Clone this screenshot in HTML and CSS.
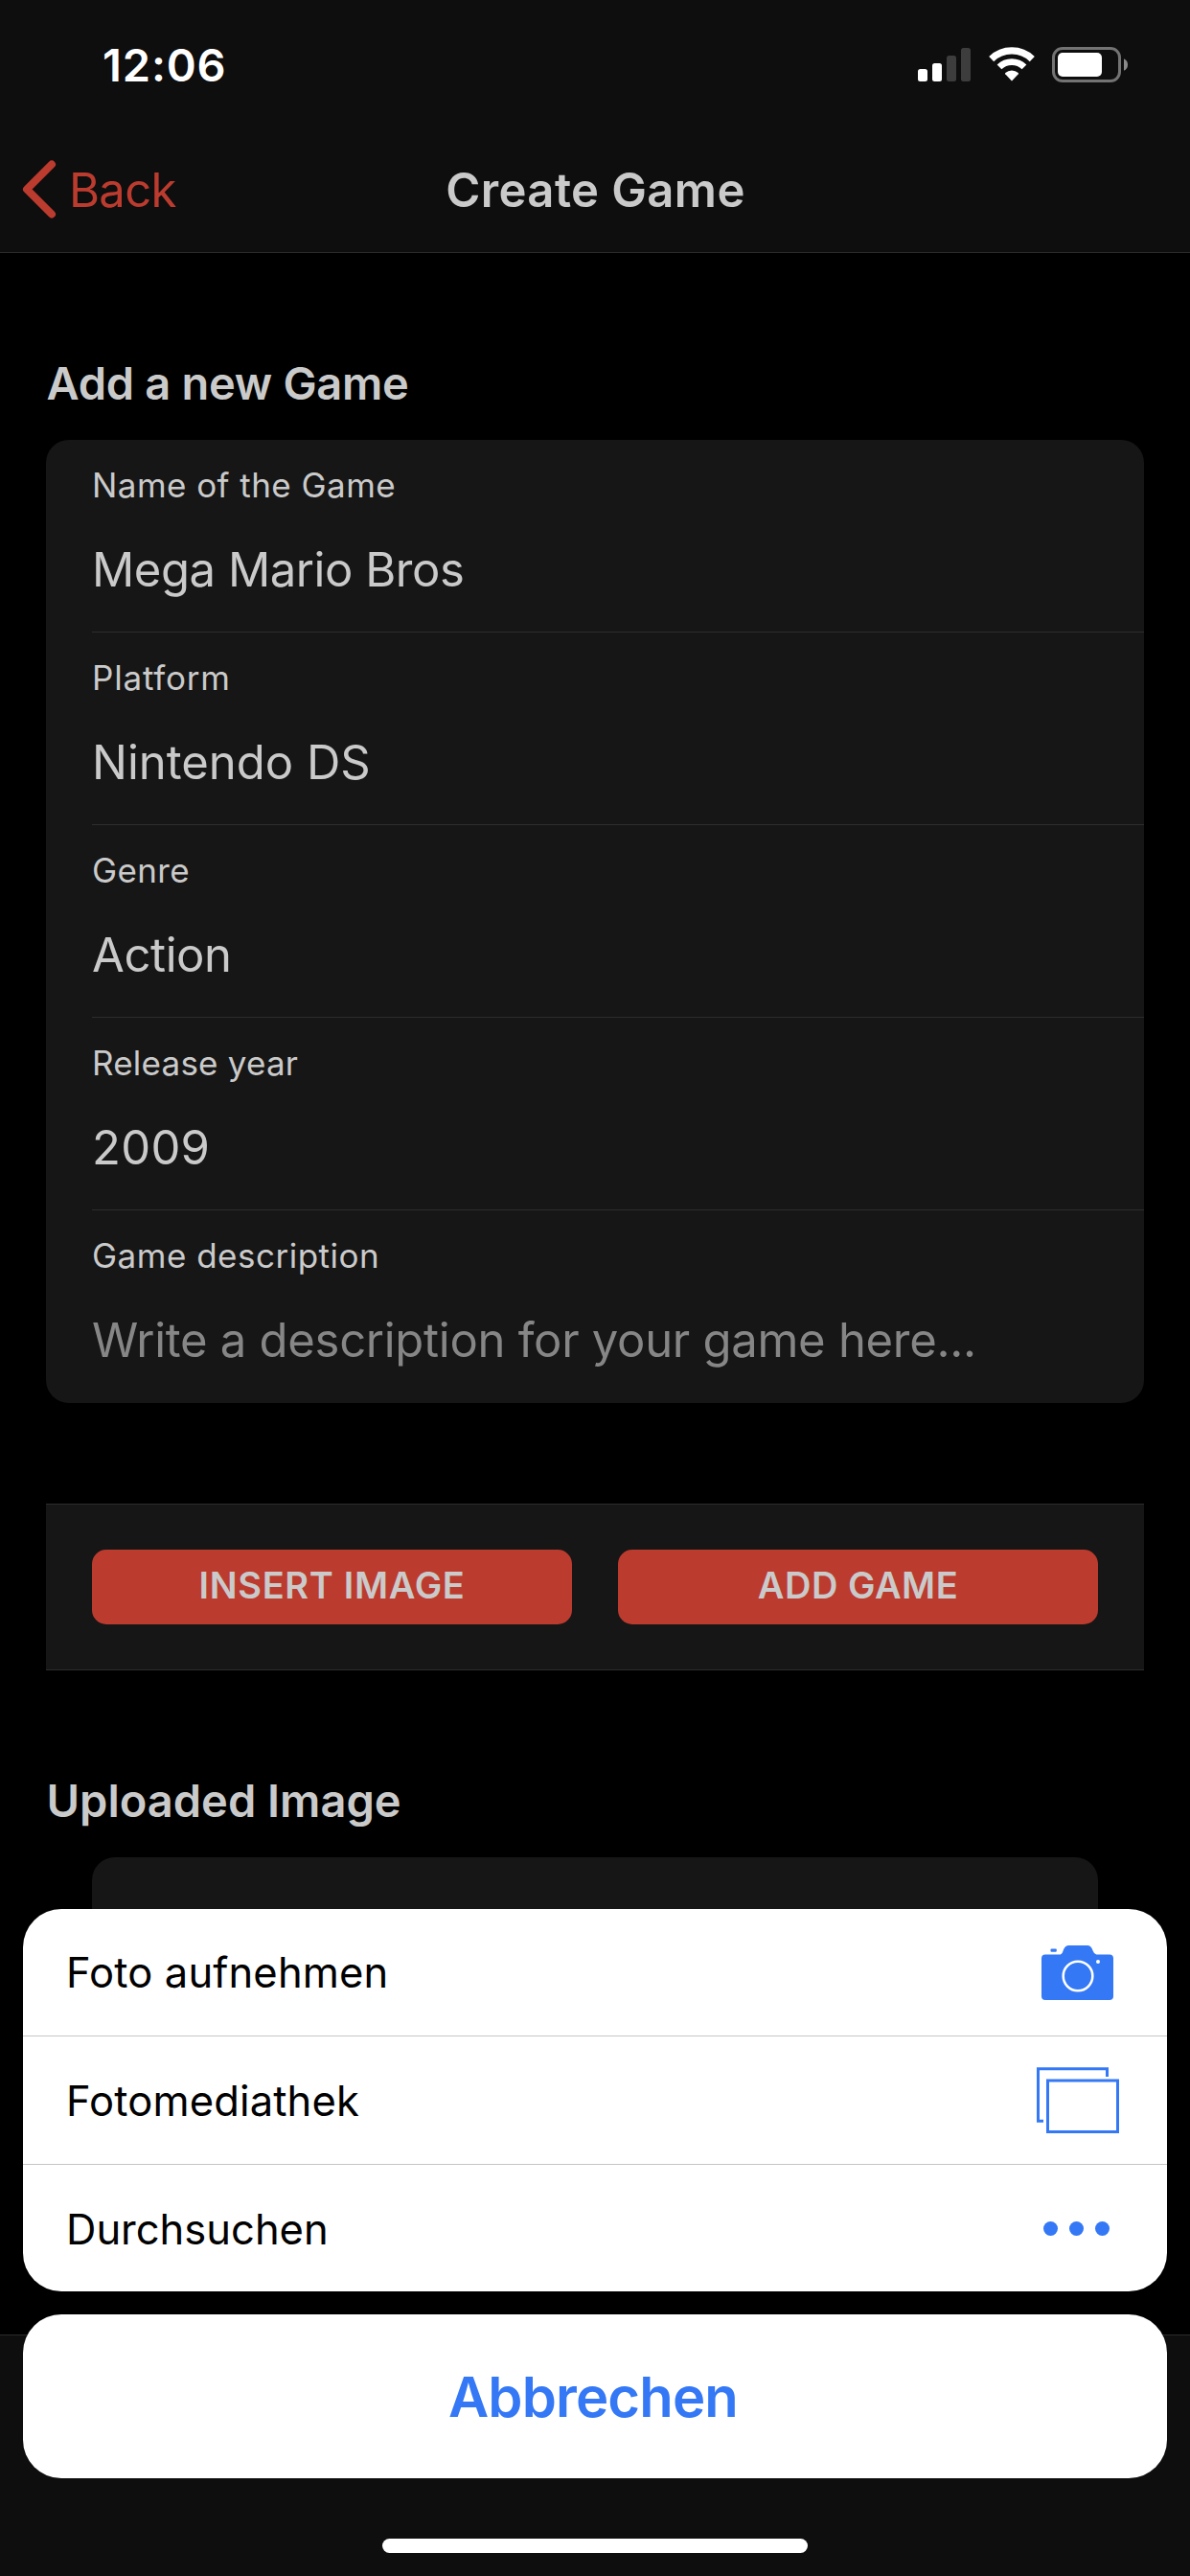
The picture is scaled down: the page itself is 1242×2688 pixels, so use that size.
FILE: index.html
```html
<!DOCTYPE html>
<html lang="en">
<head>
<meta charset="utf-8">
<title>Create Game</title>
<link rel="stylesheet" href="styles.css">
</head>
<body>
<div class="screen">
  <header class="header">
    <div class="status">
      <span class="clock">12:06</span>
      <div class="indicators">
        <svg width="56" height="36" viewBox="0 0 56 36">
          <rect x="0" y="22" width="10" height="13" rx="2.5" fill="#fff"/>
          <rect x="15" y="16" width="10" height="19" rx="2.5" fill="#fff"/>
          <rect x="30" y="8" width="10" height="27" rx="2.5" fill="#3d3d3d"/>
          <rect x="45" y="0" width="10" height="35" rx="2.5" fill="#3d3d3d"/>
        </svg>
        <svg width="48" height="36" viewBox="0 0 48 36">
          <path d="M2.7 12.6A30.5 30.5 0 0 1 45.3 12.6" fill="none" stroke="#fff" stroke-width="7.2"/>
          <path d="M11 20.9A18.7 18.7 0 0 1 37 20.9" fill="none" stroke="#fff" stroke-width="6.8"/>
          <path d="M24 35.5l-6.8-7.2a1 1 0 0 1 .1-1.3a10 10 0 0 1 13.4 0a1 1 0 0 1 .1 1.3z" fill="#fff"/>
        </svg>
        <svg width="80" height="38" viewBox="0 0 80 38">
          <rect x="1.5" y="1.5" width="69" height="34" rx="9.5" fill="none" stroke="#737373" stroke-width="3"/>
          <rect x="6" y="6" width="46" height="25" rx="5" fill="#fff"/>
          <path d="M75 12.2q4 2 4 6.300q0 4.300-4 6.300z" fill="#8a8a8a"/>
        </svg>
      </div>
    </div>
    <nav class="nav">
      <a class="back">
        <svg width="38" height="64" viewBox="0 0 38 64"><path d="M32 6.500L6 32.500L32 58.500" fill="none" stroke="#bc3b2f" stroke-width="8" stroke-linecap="round" stroke-linejoin="round"/></svg>
        <span>Back</span>
      </a>
      <h1 class="title">Create Game</h1>
    </nav>
  </header>

  <main class="content">
    <h2 class="section-title add-title">Add a new Game</h2>
    <div class="card">
      <div class="field"><div class="label name-label">Name of the Game</div><div class="value name-value">Mega Mario Bros</div></div>
      <div class="field"><div class="label platform-label">Platform</div><div class="value platform-value">Nintendo DS</div></div>
      <div class="field"><div class="label genre-label">Genre</div><div class="value genre-value">Action</div></div>
      <div class="field"><div class="label year-label">Release year</div><div class="value year-value">2009</div></div>
      <div class="field"><div class="label desc-label">Game description</div><div class="value placeholder">Write a description for your game here...</div></div>
    </div>
    <div class="actions">
      <button class="button insert">INSERT IMAGE</button>
      <button class="button">ADD GAME</button>
    </div>
    <h2 class="section-title">Uploaded Image</h2>
    <div class="image-box"></div>
  </main>
  <footer class="tabbar"></footer>

  <div class="sheet">
    <div class="menu">
      <div class="item"><span>Foto aufnehmen</span>
        <svg class="camera" width="75" height="57" viewBox="0 0 75 57">
          <rect x="9.500" y="3.500" width="6.300" height="3.200" rx="1" fill="#3478f6"/>
          <path d="M4 9.500H19C21.500 9.500 22 7 23 4.500C24.200 1.500 26 0 28.500 0H48C50.500 0 52 1.500 53.200 4.500C54.200 7 55.500 9.500 58.500 9.500H71Q75 9.500 75 13.500V53Q75 57 71 57H4Q0 57 0 53V13.500Q0 9.500 4 9.500Z" fill="#3478f6"/>
          <circle cx="38" cy="32" r="15.300" fill="none" stroke="#fff" stroke-width="2.600"/>
          <circle cx="59" cy="17" r="2" fill="#fff"/>
        </svg>
      </div>
      <div class="item"><span>Fotomediathek</span>
        <svg class="photos" width="86" height="70" viewBox="0 0 86 70" fill="none" stroke="#3478f6" stroke-width="3">
          <path d="M73.500 10V1.800H1.500V56.200H7"/>
          <rect x="11.500" y="14" width="73" height="53.500"/>
        </svg>
      </div>
      <div class="item last"><span class="browse">Durchsuchen</span>
        <svg class="dots" width="70" height="16" viewBox="0 0 70 16" fill="#3478f6"><circle cx="7.500" cy="7.500" r="7.500"/><circle cx="34.500" cy="7.500" r="7.500"/><circle cx="61.500" cy="7.500" r="7.500"/></svg>
      </div>
    </div>
    <button class="cancel">Abbrechen</button>
    <div class="home-indicator"></div>
  </div>
</div>
</body>
</html>
```
FILE: styles.css
```css
* { box-sizing: border-box; }

body {
  margin: 0;
  background: #000;
  color: #cacaca;
  font-family: Inter, "Liberation Sans", sans-serif;
}

h1, h2 { margin: 0; font-weight: 600; }
svg { display: block; flex: none; }
button { border: 0; margin: 0; font-family: inherit; }

.screen {
  position: relative;
  display: flex;
  flex-direction: column;
  width: 1242px;
  height: 2688px;
  overflow: hidden;
}

/* Header */
.header {
  flex: none;
  height: 264px;
  background: #0e0e0e;
  border-bottom: 1px solid #2b2b2b;
}
.status {
  display: flex;
  justify-content: space-between;
  align-items: flex-start;
  height: 132px;
  padding: 38px 64px 0 107px;
}
.clock {
  color: #fff;
  font-size: 47px;
  font-weight: 600;
  line-height: 60px;
  letter-spacing: .86px;
}
.indicators { display: flex; gap: 18px; padding-top: 11px; }
.indicators svg:first-child { margin-top: 1px; }

.nav {
  display: grid;
  grid-template-columns: 1fr auto 1fr;
  align-items: center;
  height: 131px;
  padding: 3px 0 0 1px;
}
.back {
  display: flex;
  align-items: center;
  gap: 12px;
  padding-left: 21px;
  color: #bc3b2f;
  font-size: 49px;
  line-height: 60px;
  letter-spacing: -.7px;
}
.back svg { margin-top: -5px; }
.title { font-size: 49px; line-height: 60px; letter-spacing: .4px; }

/* Form */
.content { flex: 1; min-height: 0; padding: 0 48px; overflow: hidden; }
.section-title { margin: 106px 0 29px .5px; font-size: 47px; line-height: 60px; }
.add-title { letter-spacing: -.3px; }
.card { background: #161616; border-radius: 24px; }
.field {
  display: flex;
  flex-direction: column;
  gap: 37px;
  height: 201px;
  margin-left: 48px;
  padding-top: 25px;
  border-bottom: 1px solid #2d2d2d;
}
.field:last-child { border-bottom: 0; }
.label { font-size: 35px; line-height: 44px; }
.value { font-size: 49px; line-height: 60px; }
.name-label { letter-spacing: .45px; }
.platform-label { letter-spacing: .8px; }
.genre-label { letter-spacing: .35px; }
.year-label { letter-spacing: .22px; }
.desc-label { letter-spacing: .5px; }
.name-value { letter-spacing: -.45px; }
.genre-value { letter-spacing: -.4px; }
.year-value { letter-spacing: .3px; }
.placeholder { color: #868686; letter-spacing: -.29px; }

.actions {
  display: grid;
  grid-template-columns: 1fr 1fr;
  gap: 48px;
  height: 174px;
  margin-top: 105px;
  padding: 47px 48px;
  background: #161616;
  border: solid #2d2d2d;
  border-width: 1px 0;
}
.button {
  padding: 0 0 5px;
  border-radius: 15px;
  background: #bc3b2f;
  color: #cacaca;
  font-size: 38px;
  font-weight: 600;
  letter-spacing: .53px;
}
.insert { letter-spacing: .69px; }
.image-box { height: 400px; margin: 0 48px; background: #161616; border-radius: 24px; }
.tabbar { flex: none; height: 252px; background: #0e0e0e; border-top: 1px solid #2b2b2b; }

/* Action sheet over the form */
.sheet {
  position: absolute;
  inset: 1992px 24px 0;
  display: flex;
  flex-direction: column;
}
.menu { background: #fff; border-radius: 40px; overflow: hidden; }
.item {
  display: flex;
  align-items: center;
  justify-content: space-between;
  height: 134px;
  padding: 0 50px 0 45px;
  border-bottom: 1px solid #c6c6c6;
  color: #000;
  font-size: 43.5px;
  letter-spacing: .14px;
}
.item:first-child { height: 133px; }
.item.last { height: 132px; padding-top: 2px; border: 0; }
.browse { letter-spacing: 0; }
.camera { margin: 1px 6px 0 0; }
.dots { margin-right: 9px; }
.cancel {
  height: 171px;
  margin-top: 24px;
  padding: 0 4px 0 0;
  border-radius: 40px;
  background: #fff;
  color: #3478f6;
  font-size: 58px;
  font-weight: 600;
  letter-spacing: -.87px;
}
.home-indicator {
  width: 444px;
  height: 15px;
  margin: 63px auto 0;
  border-radius: 8px;
  background: #fff;
}
```
